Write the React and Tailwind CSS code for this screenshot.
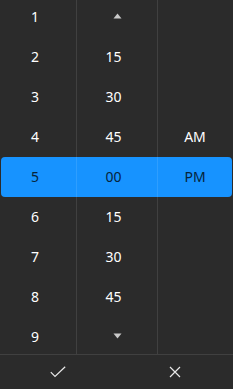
import React from 'react';

const hours = ['1', '2', '3', '4', '5', '6', '7', '8', '9'];
const minutes = ['up', '15', '30', '45', '00', '15', '30', '45', 'down'];
const periods = ['', '', '', 'AM', 'PM', '', '', '', ''];

function Arrow({ down }) {
    return (
        <svg width="9" height="6" viewBox="0 0 9 6" className={down ? 'rotate-180' : ''}>
            <path d="M4.5 0.5 L8.5 5.5 L0.5 5.5 Z" fill="#c9c9c9" />
        </svg>
    );
}

function Column({ items, pad, last }) {
    return (
        <div className={`flex-1 flex flex-col -mt-[4px] ${last ? '' : 'border-r border-white/10'}`}>
            {items.map((item, i) => {
                const selected = i === 4;
                const isArrow = item === 'up' || item === 'down';
                return (
                    <div
                        key={i}
                        className={`h-10 shrink-0 flex items-center justify-center ${isArrow ? '' : pad} ${selected ? 'text-[#06243a]' : 'text-white'}`}
                    >
                        {isArrow ? <Arrow down={item === 'down'} /> : item}
                    </div>
                );
            })}
        </div>
    );
}

export default function App() {
    return (
        <div
            className="w-[233px] h-[389px] bg-[#2b2b2b] flex flex-col text-[14px] select-none"
            style={{ fontFamily: '"Noto Sans", "Open Sans", sans-serif' }}
        >
            <div className="relative h-[354px] overflow-hidden flex">
                {/* selected row band */}
                <div className="absolute left-[1px] right-[1px] top-[157px] h-10 rounded-[4px] bg-[#1793ff]" />
                <div className="relative flex flex-1">
                    <div className="w-[77px] flex">
                        <Column items={hours} pad="pr-[6px]" />
                    </div>
                    <div className="w-[81px] flex">
                        <Column items={minutes} pad="pr-[7px]" />
                    </div>
                    <div className="flex-1 flex">
                        <Column items={periods} pad="pr-[1px]" last />
                    </div>
                </div>
            </div>

            <div className="flex-1 flex border-t border-white/10">
                <button className="flex-1 flex items-center justify-center">
                    <svg width="16" height="12" viewBox="0 0 16 12" fill="none">
                        <path d="M0.8 6.2 L5 10.4 L15.2 0.8" stroke="#e8e8e8" strokeWidth="1.2" />
                    </svg>
                </button>
                <button className="flex-1 flex items-center justify-center">
                    <svg width="12" height="12" viewBox="0 0 12 12" fill="none">
                        <path d="M1 1 L11 11 M11 1 L1 11" stroke="#e8e8e8" strokeWidth="1.2" />
                    </svg>
                </button>
            </div>
        </div>
    );
}
